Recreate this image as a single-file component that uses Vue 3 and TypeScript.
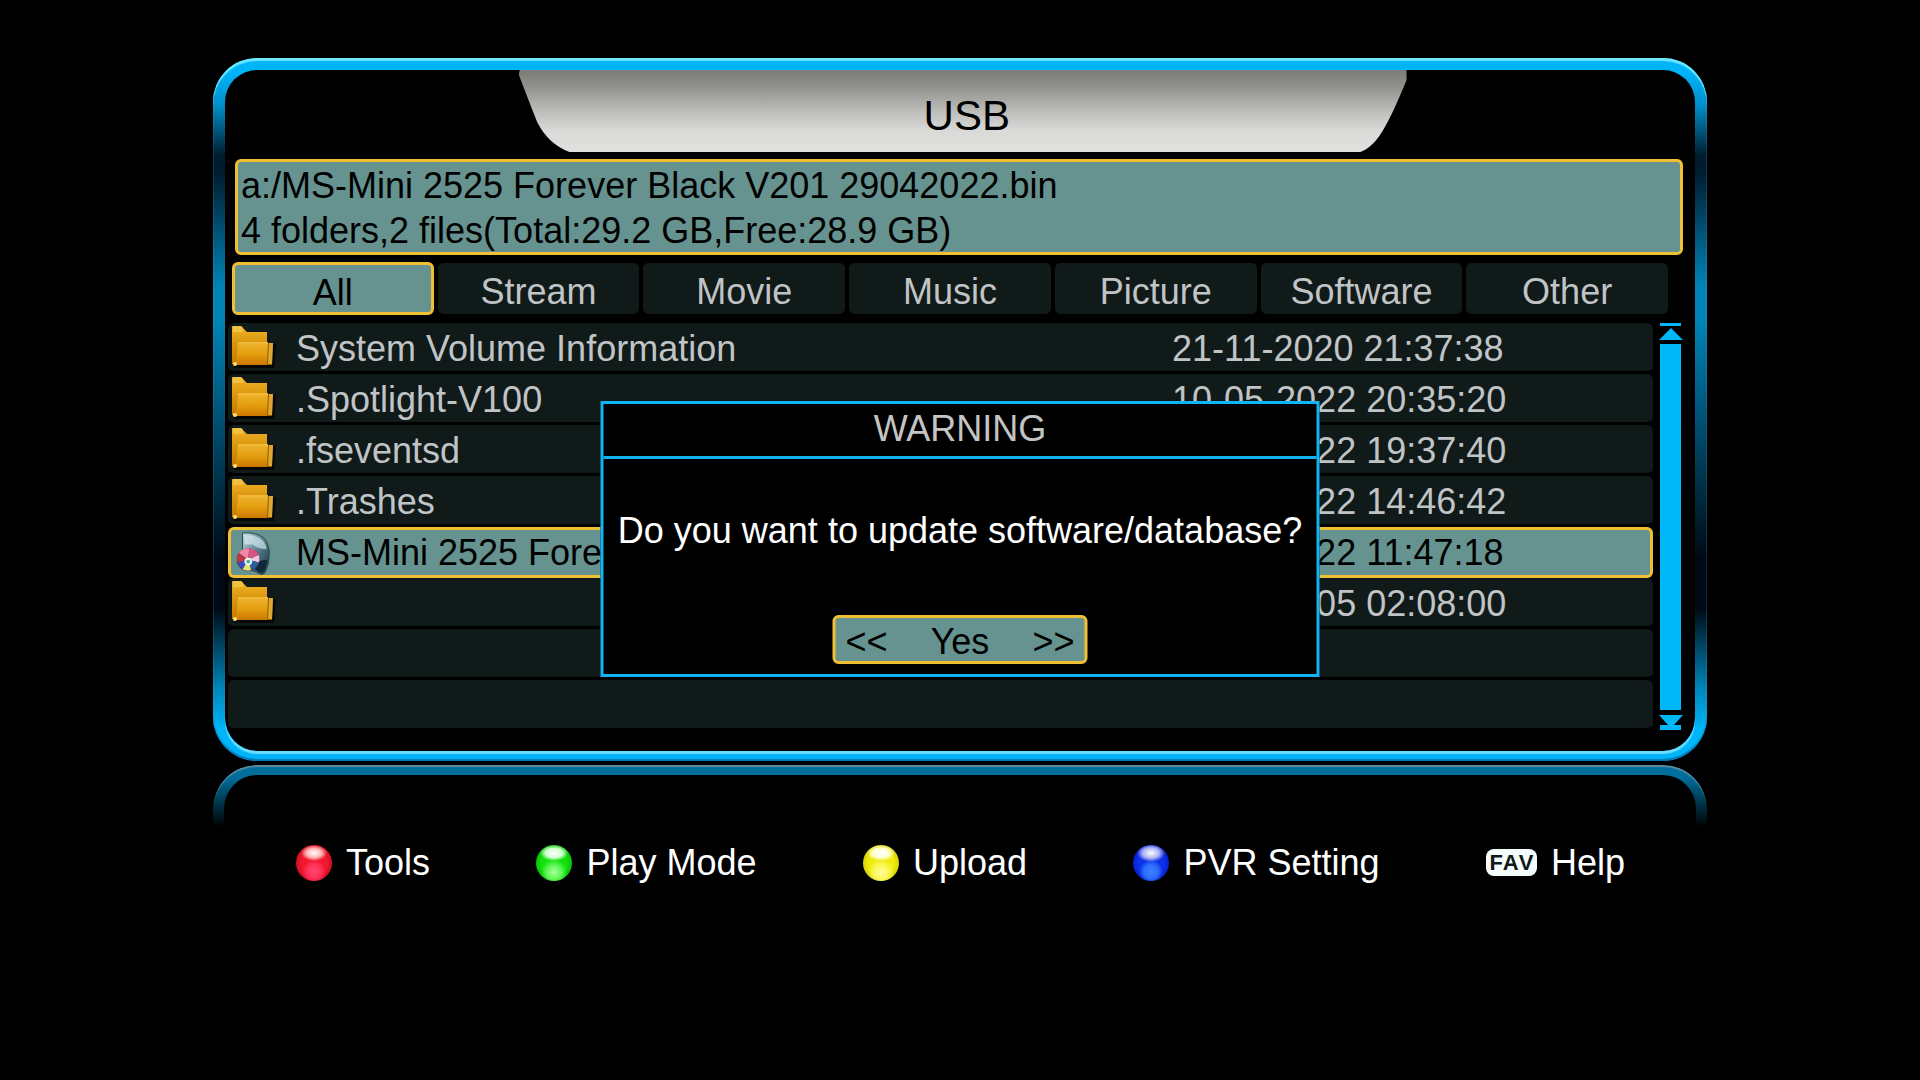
<script setup lang="ts">
import { ref } from 'vue'

interface Entry {
  kind: 'folder' | 'software' | 'none'
  name: string
  date: string
}

const tabs: string[] = ['All', 'Stream', 'Movie', 'Music', 'Picture', 'Software', 'Other']
const activeTab = ref('All')

const entries: Entry[] = [
  { kind: 'folder', name: 'System Volume Information', date: '21-11-2020 21:37:38' },
  { kind: 'folder', name: '.Spotlight-V100', date: '10-05-2022 20:35:20' },
  { kind: 'folder', name: '.fseventsd', date: '10-05-2022 19:37:40' },
  { kind: 'folder', name: '.Trashes', date: '10-05-2022 14:46:42' },
  { kind: 'software', name: 'MS-Mini 2525 Forever Black V201 29042022.bin', date: '29-04-2022 11:47:18' },
  { kind: 'folder', name: '', date: '01-01-2005 02:08:00' },
  { kind: 'none', name: '', date: '' },
  { kind: 'none', name: '', date: '' },
]
const selected = ref(4)

const actions = [
  { color: 'red', label: 'Tools' },
  { color: 'green', label: 'Play Mode' },
  { color: 'yellow', label: 'Upload' },
  { color: 'blue', label: 'PVR Setting' },
]
</script>

<template>
  <main class="screen">
    <svg class="defs" width="0" height="0" aria-hidden="true">
      <defs>
        <linearGradient id="folder-back" x1="0" y1="0" x2="0" y2="1">
          <stop offset="0" stop-color="#f0b428" />
          <stop offset="0.5" stop-color="#d8940c" />
          <stop offset="1" stop-color="#c87800" />
        </linearGradient>
        <linearGradient id="folder-front" x1="0" y1="0" x2="0" y2="1">
          <stop offset="0" stop-color="#eeb430" />
          <stop offset="0.5" stop-color="#e4a010" />
          <stop offset="1" stop-color="#cc7800" />
        </linearGradient>
        <linearGradient id="glass" x1="0" y1="0" x2="1" y2="1">
          <stop offset="0" stop-color="#c4dce4" />
          <stop offset="0.45" stop-color="#5f8794" />
          <stop offset="1" stop-color="#142c3c" />
        </linearGradient>
        <linearGradient id="title-fill" x1="0" y1="0" x2="0" y2="1">
          <stop offset="0" stop-color="#7c7c76" />
          <stop offset="0.2" stop-color="#90908c" />
          <stop offset="0.5" stop-color="#bcbcb9" />
          <stop offset="0.75" stop-color="#dadbd8" />
          <stop offset="1" stop-color="#e0e1df" />
        </linearGradient>
      </defs>
    </svg>

    <section class="panel">
      <header class="title">
        <svg class="title-shape" viewBox="0 0 881 82" preserveAspectRatio="none" aria-hidden="true">
          <path d="M1 0H881V10Q868 42 860 56Q849 77 835 82H50Q29 74 18 52Q14 42 1 8Q-1 4 1 0Z" fill="url(#title-fill)" />
        </svg>
        <h1>USB</h1>
      </header>

      <div class="info">
        <p>a:/MS-Mini 2525 Forever Black V201 29042022.bin</p>
        <p>4 folders,2 files(Total:29.2 GB,Free:28.9 GB)</p>
      </div>

      <nav class="tabs">
        <button
          v-for="tab in tabs"
          :key="tab"
          type="button"
          class="tab"
          :class="{ active: tab === activeTab }"
          @click="activeTab = tab"
        >{{ tab }}</button>
      </nav>

      <div class="browser">
        <table class="files">
          <colgroup>
            <col class="col-icon" />
            <col />
            <col class="col-date" />
          </colgroup>
          <tbody>
            <tr v-for="(entry, i) in entries" :key="i" :class="{ selected: i === selected }">
              <td class="icon">
                <svg v-if="entry.kind === 'folder'" viewBox="0 0 46 46" aria-hidden="true">
                  <path d="M4 41L4 44H44L46 20H42Z" fill="#050806" />
                  <path d="M2 3Q2 2 3 2H11L17 8H37V40H2Z" fill="url(#folder-back)" />
                  <path d="M3 2H11L13 4V8H3Z" fill="#f4c040" />
                  <path d="M37 19H43L42 41H35Z" fill="#8a5c08" />
                  <path d="M39 19H43L42 40H38Z" fill="#e0a630" />
                  <path d="M8 18H38L37 41H3Q7 38 7 30Z" fill="url(#folder-front)" />
                  <path d="M8 19H38" stroke="#f4c048" stroke-width="1" />
                  <circle cx="5" cy="40" r="2" fill="#ffe07a" />
                </svg>
                <svg v-else-if="entry.kind === 'software'" viewBox="0 0 46 46" aria-hidden="true">
                  <path d="M11 2Q25 1 33 7Q38 12 39 22Q39 36 34 44Q31 47 26 43L11 38Z" fill="url(#glass)" stroke="#28444f" stroke-width="1" />
                  <path d="M13 4Q26 4 32 10Q36 14 36 19Q25 18 22 14H13Z" fill="#d8ecf2" opacity="0.65" />
                  <path d="M24 34Q30 30 37 30Q36 39 32 43Q28 44 24 40Z" fill="#10283a" />
                  <circle cx="17" cy="30" r="12" fill="#26383f" />
                  <path d="M17 30L7 23A12 12 0 0 1 18 18Z" fill="#f08aa6" />
                  <path d="M17 30L18 18A12 12 0 0 1 28 25Z" fill="#d85484" />
                  <path d="M17 30L28 25A12 12 0 0 1 28 33Z" fill="#f4c4dc" />
                  <path d="M17 30L28 33A12 12 0 0 1 20 41Z" fill="#2c5ca0" />
                  <path d="M17 30L20 41A12 12 0 0 1 11 40Z" fill="#e8e070" />
                  <path d="M17 30L11 40A12 12 0 0 1 6 33Z" fill="#3c4cc8" />
                  <path d="M17 30L6 33A12 12 0 0 1 7 23Z" fill="#c03848" />
                  <circle cx="17" cy="32" r="4" fill="#e8f8f4" />
                  <circle cx="17" cy="32" r="2" fill="#58a898" />
                </svg>
              </td>
              <td class="name">{{ entry.name }}</td>
              <td class="date">{{ entry.date }}</td>
            </tr>
          </tbody>
        </table>

        <div class="scroll" aria-hidden="true">
          <svg viewBox="0 0 24 18"><path d="M1 0H22V3H1ZM12 5L24 17H0Z" fill="#00b8f8" /></svg>
          <div class="thumb"></div>
          <svg viewBox="0 0 24 18"><path d="M0 2H24L15 12H22V17H1V12H9Z" fill="#00b8f8" /></svg>
        </div>
      </div>

      <div class="dialog" role="dialog" aria-labelledby="dialog-title">
        <h2 id="dialog-title">WARNING</h2>
        <p>Do you want to update software/database?</p>
        <button type="button" class="choice">
          <span>&lt;&lt;</span><span>Yes</span><span>&gt;&gt;</span>
        </button>
      </div>
    </section>

    <footer class="footer">
      <button v-for="action in actions" :key="action.label" type="button" class="action">
        <span class="orb" :class="action.color"></span>{{ action.label }}
      </button>
      <button type="button" class="action"><span class="fav">FAV</span>Help</button>
    </footer>
  </main>
</template>

<style>
html,
body {
  background: #000;
}
</style>

<style scoped>
.screen {
  min-height: 100vh;
  box-sizing: border-box;
  padding: 58px 213px 0;
  background: #000;
  color: #c0c4c6;
  font-family: "Liberation Sans", Arial, sans-serif;
  font-size: 36px;
  line-height: 45px;
}
.defs {
  position: absolute;
}
button {
  margin: 0;
  padding: 0;
  border: 0;
  background: none;
  color: inherit;
  font: inherit;
}
h1,
h2,
p {
  margin: 0;
  font-weight: 400;
}

.panel {
  position: relative;
  padding: 0 12px 20px 3px;
  border: 12px solid transparent;
  border-bottom-width: 10px;
  border-radius: 44px;
  background:
    linear-gradient(#000, #000) padding-box,
    linear-gradient(
      #00b4f8 0,
      #00b4f8 14px,
      #0090cc 46px,
      #001c2e 98px,
      #001c2e 114px,
      #0084b8 230px,
      #0084b8 260px,
      #000a14 500px,
      #000a14 550px,
      #0084b8 630px,
      #00b4f8 670px,
      #00b4f8 100%
    ) border-box;
}
.panel::before,
.panel::after {
  content: "";
  position: absolute;
  pointer-events: none;
}
.panel::before {
  inset: -12px -12px -10px;
  border-radius: 44px;
  box-shadow: inset 0 3px 1px #6ce8ff, inset 0 -2px 1px #0078b4;
}
.panel::after {
  inset: 0;
  border-radius: 32px;
  box-shadow: 0 3px 1px #6cdcff;
  clip-path: inset(50% 0 -4px 0);
}

.title {
  position: relative;
  height: 82px;
  margin: 0 19% 7px 20%;
  display: flex;
  align-items: center;
  justify-content: center;
}
.title-shape {
  position: absolute;
  inset: 0;
  width: 100%;
  height: 100%;
}
.title h1 {
  position: relative;
  padding: 8px 0 0 8px;
  color: #000;
  font-size: 42px;
}

.info {
  margin: 0 0 7px 7px;
  padding: 1px 3px 0;
  height: 89px;
  border: 3px solid #f0c034;
  border-radius: 6px;
  background: #66938f;
  color: #000;
}

.tabs {
  display: grid;
  grid-template-columns: repeat(7, 1fr);
  gap: 4px;
  margin: 0 15px 8px 4px;
}
.tab {
  height: 53px;
  padding-top: 5px;
  border: 0 solid #000;
  border-width: 1px 0;
  border-radius: 6px;
  background: #101a19;
}
.tab.active {
  border: 3px solid #f0c034;
  background: #66938f;
  color: #000;
}

.browser {
  display: flex;
  gap: 6px;
}
.files {
  flex: 1;
  border-spacing: 0;
  table-layout: fixed;
}
.col-icon {
  width: 68px;
}
.col-date {
  width: 481px;
}
.files td {
  height: 51px;
  box-sizing: border-box;
  padding: 3px 0 0;
  border: 0 solid #000;
  border-bottom-width: 3px;
  background: #101a19;
  background-clip: padding-box;
  white-space: nowrap;
}
.files td.icon {
  padding: 0;
}
.files td:first-child {
  border-radius: 6px 0 0 6px;
}
.files td:last-child {
  border-radius: 0 6px 6px 0;
}
.icon svg {
  display: block;
  width: 46px;
  height: 46px;
  margin-left: 2px;
}
.files .selected td {
  padding-top: 0;
  border-color: #f0c034;
  border-width: 3px 0;
  background: #66938f;
  color: #000;
}
.files .selected td:first-child {
  border-left-width: 3px;
}
.files .selected td:last-child {
  border-right-width: 3px;
}
.selected .icon svg {
  margin-left: 0;
  height: 44px;
}

.scroll {
  width: 24px;
  display: flex;
  flex-direction: column;
  gap: 3px;
}
.scroll svg {
  display: block;
  width: 24px;
  height: 18px;
}
.thumb {
  flex: 1;
  margin: 0 2px 0 1px;
  background: #00b8f8;
}

.dialog {
  position: absolute;
  top: 331px;
  left: 50%;
  width: 719px;
  box-sizing: border-box;
  padding-bottom: 10px;
  transform: translateX(-50%);
  border: 3px solid #10b4f0;
  background: #000;
  display: flex;
  flex-direction: column;
  align-items: center;
}
.dialog h2 {
  align-self: stretch;
  padding: 2px 0 5px;
  border-bottom: 3px solid #10b4f0;
  color: #c4c4c4;
  font-size: 36px;
  text-align: center;
}
.dialog p {
  margin: 49px 0 62px;
  color: #fff;
  white-space: nowrap;
}
.choice {
  width: 255px;
  height: 49px;
  padding: 3px 10px 0;
  display: flex;
  align-items: center;
  justify-content: space-between;
  border: 3px solid #f0c034;
  border-radius: 6px;
  background: #66938f;
  color: #000;
}

.footer {
  position: relative;
  margin-top: 4px;
  padding: 75px 82px 0 83px;
  display: flex;
  justify-content: space-between;
  color: #fff;
}
.footer::before {
  content: "";
  position: absolute;
  inset: 0 0 auto;
  height: 70px;
  box-sizing: border-box;
  border: 11px solid #006e9c;
  border-top-width: 10px;
  border-bottom: 0;
  border-radius: 44px 44px 0 0;
  mask-image: linear-gradient(#000 12px, transparent 62px);
}
.footer::after {
  content: "";
  position: absolute;
  inset: 0 0 auto;
  height: 70px;
  border-radius: 44px 44px 0 0;
  box-shadow: inset 0 2px 1px #5c8c9c;
  mask-image: linear-gradient(#000 12px, transparent 50px);
}
.action {
  position: relative;
  display: flex;
  align-items: center;
  white-space: nowrap;
}
.orb {
  width: 36px;
  height: 36px;
  margin-right: 14px;
  border-radius: 50%;
}
.red {
  background:
    radial-gradient(ellipse 13px 8px at 50% 8px, #fff 0, #ffb0b0 60%, transparent 100%),
    radial-gradient(circle 12px at 50% 74%, #ff4870 0, #ff3058 60%, transparent 100%),
    radial-gradient(circle, #f01830 50%, #a80010 100%);
}
.green {
  background:
    radial-gradient(ellipse 14px 8px at 50% 8px, #fff 0, #d0ffd0 60%, transparent 100%),
    radial-gradient(circle 13px at 50% 76%, #a8ff9c 0, #60f858 55%, transparent 100%),
    radial-gradient(circle, #14e010 50%, #009000 100%);
}
.yellow {
  background:
    radial-gradient(ellipse 14px 8px at 50% 8px, #fff 0, #ffffd0 60%, transparent 100%),
    radial-gradient(circle 13px at 50% 76%, #fffc9c 0, #fcf858 55%, transparent 100%),
    radial-gradient(circle, #f0ec10 50%, #b4a800 100%);
}
.blue {
  background:
    radial-gradient(ellipse 14px 9px at 50% 8px, #fff 0, #a8b0f4 60%, transparent 100%),
    radial-gradient(circle 12px at 50% 74%, #3c80ff 0, #2c6cfc 60%, transparent 100%),
    radial-gradient(circle, #0c30e8 50%, #0008a0 100%);
}
.fav {
  width: 51px;
  height: 27px;
  margin-right: 14px;
  border-radius: 8px;
  background: #f4fcfc;
  color: #101818;
  font-size: 22px;
  font-weight: 700;
  font-kerning: none;
  line-height: 27px;
  text-align: center;
}
</style>
